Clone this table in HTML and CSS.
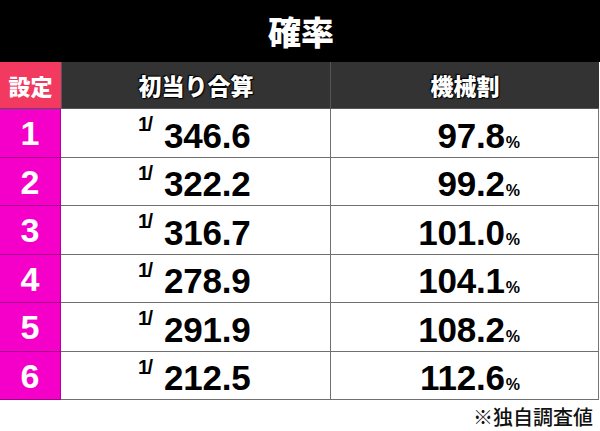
FILE: index.html
```html
<!DOCTYPE html>
<html lang="ja">
<head>
<meta charset="utf-8">
<link rel="stylesheet" href="styles.css">
</head>
<body>
<div class="page">
  <div class="title">確率</div>
  <div class="table">
    <div class="hcell set">設定</div>
    <div class="hcell">初当り合算</div>
    <div class="hcell last">機械割</div>

    <div class="num">1</div>
    <div class="prob"><span class="frac">1/</span><span class="val">346.6</span></div>
    <div class="rate"><span class="val">97.8</span><span class="pct">%</span></div>

    <div class="num">2</div>
    <div class="prob"><span class="frac">1/</span><span class="val">322.2</span></div>
    <div class="rate"><span class="val">99.2</span><span class="pct">%</span></div>

    <div class="num">3</div>
    <div class="prob"><span class="frac">1/</span><span class="val">316.7</span></div>
    <div class="rate"><span class="val">101.0</span><span class="pct">%</span></div>

    <div class="num">4</div>
    <div class="prob"><span class="frac">1/</span><span class="val">278.9</span></div>
    <div class="rate"><span class="val">104.1</span><span class="pct">%</span></div>

    <div class="num">5</div>
    <div class="prob"><span class="frac">1/</span><span class="val">291.9</span></div>
    <div class="rate"><span class="val">108.2</span><span class="pct">%</span></div>

    <div class="num">6</div>
    <div class="prob"><span class="frac">1/</span><span class="val">212.5</span></div>
    <div class="rate"><span class="val">112.6</span><span class="pct">%</span></div>
  </div>
  <div class="note">※独自調査値</div>
</div>
</body>
</html>
```

FILE: styles.css
```css
* { box-sizing: border-box; }
html, body { margin: 0; padding: 0; background: #fff; }
body {
  width: 600px;
  height: 431px;
  overflow: hidden;
  font-family: "Liberation Sans", "Noto Sans CJK JP", sans-serif;
}
.page { width: 600px; }
.title {
  height: 62px;
  background: #000;
  color: #fff;
  font-family: "Noto Sans CJK JP", sans-serif;
  font-weight: 900;
  font-size: 33px;
  line-height: 62px;
  text-align: center;
  padding-left: 2px;
}
.table {
  display: grid;
  grid-template-columns: 61px 269px 269px;
  grid-template-rows: 47px repeat(6, 48.5px);
  border-right: 1px solid #777;
  width: 599px;
}
.hcell {
  background: #333;
  color: #fff;
  font-family: "Noto Sans CJK JP", sans-serif;
  font-weight: 900;
  font-size: 23px;
  display: flex;
  align-items: center;
  justify-content: center;
  text-shadow: 0 0 2px #000, 1px 1px 1px #000, -1px -1px 1px #000;
  border-left: 1px solid #555;
  border-bottom: 1px solid #555;
  padding-bottom: 1px;
}
.hcell.set {
  background: #f23a61;
  border-left: none;
  font-size: 22px;
  text-shadow: none;
}
.num {
  background: #f400c9;
  color: #fff;
  font-weight: 700;
  font-size: 34px;
  display: flex;
  align-items: center;
  justify-content: center;
  border-bottom: 1px solid #a8008c;
  border-right: 1px solid #b6009a;
  padding-top: 2px;
}
.prob, .rate {
  display: flex;
  align-items: flex-end;
  border-bottom: 1px solid #6f6f6f;
  color: #000;
  font-weight: 700;
  padding-bottom: 4px;
}
.prob {
  padding-left: 77px;
}
.rate {
  justify-content: flex-end;
  padding-right: 79px;
  border-left: 1px solid #6f6f6f;
}
.frac {
  font-size: 20px;
  line-height: 20px;
  align-self: flex-start;
  margin-top: 5px;
  width: 26px;
  letter-spacing: -1.5px;
}
.val {
  font-size: 35px;
  line-height: 34px;
  letter-spacing: -0.2px;
}
.pct {
  font-size: 16px;
  line-height: 16px;
  margin-left: 1px;
  margin-bottom: 2px;
}
.note {
  text-align: right;
  padding-right: 7px;
  padding-top: 2px;
  font-family: "Noto Sans CJK JP", sans-serif;
  font-weight: 500;
  font-size: 20px;
  color: #111;
}
```
